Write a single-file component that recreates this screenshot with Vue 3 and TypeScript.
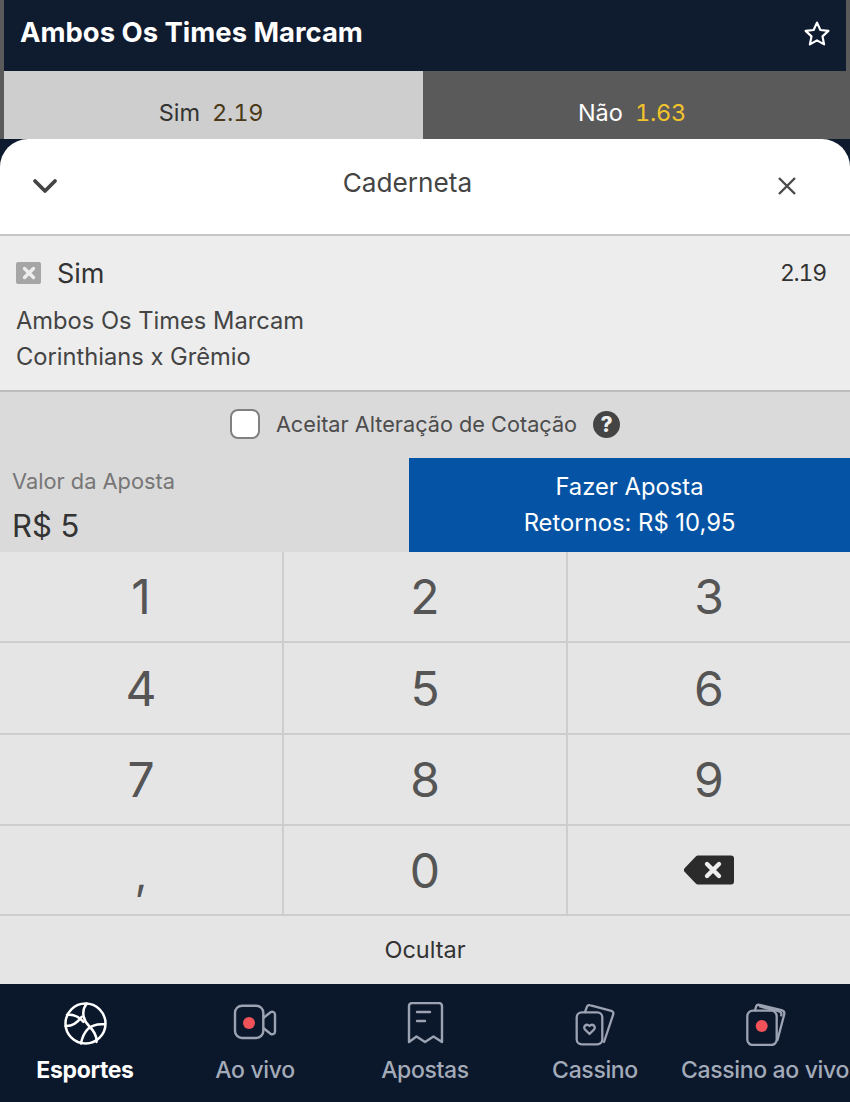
<script setup lang="ts">
const keys = ["1", "2", "3", "4", "5", "6", "7", "8", "9", ",", "0", "back"];

type NavItem = { id: string; label: string; active?: boolean };
const navItems: NavItem[] = [
  { id: "sports", label: "Esportes", active: true },
  { id: "live", label: "Ao vivo" },
  { id: "bets", label: "Apostas" },
  { id: "casino", label: "Cassino" },
  { id: "livecasino", label: "Cassino ao vivo" },
];
</script>

<template>
  <div class="page">
    <section class="market">
      <header class="market-head">
        <h1>Ambos Os Times Marcam</h1>
        <svg class="star" viewBox="0 0 28 28" width="28" height="28" fill="none" stroke="#fff" stroke-width="2.2" stroke-linejoin="round">
          <path d="M14 2.6l3.4 7.4 8 .9-5.900 5.500 1.600 8-7.100-4-7.100 4 1.600-8-5.900-5.500 8-.9z" />
        </svg>
      </header>
      <div class="odds">
        <div class="odd odd-on"><span>Sim</span><b>2.19</b></div>
        <div class="odd odd-off"><span>Não</span><b>1.63</b></div>
      </div>
    </section>

    <section class="sheet">
      <header class="sheet-head">
        <svg class="chev" viewBox="0 0 26 16" width="26" height="16" fill="none" stroke="#444" stroke-width="3.8" stroke-linecap="round" stroke-linejoin="round">
          <path d="M3 3l10 10L23 3" />
        </svg>
        <h2>Caderneta</h2>
        <svg class="close" viewBox="0 0 20 20" width="20" height="20" fill="none" stroke="#4a4a4a" stroke-width="2.4">
          <path d="M2 2l16 16M18 2L2 18" />
        </svg>
      </header>

      <div class="slip">
        <div class="slip-top">
          <span class="remove">
            <svg viewBox="0 0 14 14" width="14" height="14" fill="none" stroke="#eee" stroke-width="3.4" stroke-linecap="round">
              <path d="M2.5 2.5l9 9M11.500 2.500l-9 9" />
            </svg>
          </span>
          <span class="pick">Sim</span>
          <span class="price">2.19</span>
        </div>
        <p>Ambos Os Times Marcam</p>
        <p>Corinthians x Grêmio</p>
      </div>

      <div class="accept">
        <span class="check"></span>
        <span class="accept-text">Aceitar Alteração de Cotação</span>
        <span class="help">?</span>
      </div>

      <div class="stake">
        <div class="stake-value">
          <span class="stake-label">Valor da Aposta</span>
          <span class="stake-amount">R$ 5</span>
        </div>
        <button class="place">
          <span>Fazer Aposta</span>
          <span>Retornos: R$ 10,95</span>
        </button>
      </div>

      <div class="keypad">
        <div v-for="k in keys" :key="k" class="key">
          <svg v-if="k === 'back'" viewBox="0 0 50 30" width="50" height="30">
            <path d="M14 .5h33a3 3 0 0 1 3 3v23a3 3 0 0 1-3 3H14a3 3 0 0 1-2.200-1L.8 17a3 3 0 0 1 0-4L11.800 1.500a3 3 0 0 1 2.200-1z" fill="#2b2b2b" />
            <path d="M23 9l12 12M35 9L23 21" fill="none" stroke="#eee" stroke-width="4.400" stroke-linecap="round" />
          </svg>
          <span v-else :class="{ comma: k === ',' }">{{ k }}</span>
        </div>
      </div>

      <div class="hide">Ocultar</div>
    </section>

    <nav class="tabs">
      <div v-for="item in navItems" :key="item.id" class="tab" :class="{ active: item.active }">
        <svg v-if="item.id === 'sports'" viewBox="0 0 44 44" width="44" height="44" fill="none" stroke="#fff" stroke-width="2.500" stroke-linecap="round">
          <circle cx="22.500" cy="21.500" r="20" />
          <path d="M23.700 1.500C18 9 20 18 26 24c5 5 8 10 7.500 16" />
          <path d="M42 22.300c-6-.5-13 .4-17.500 5C21 31 19 36 18 41.500" />
          <path d="M4 13c5-1 11 1 16.500 6.800" />
          <path d="M2.500 24c4.500.2 11-2 16.200-9.300" />
        </svg>
        <svg v-else-if="item.id === 'live'" viewBox="0 0 44 44" width="44" height="44" fill="none" stroke="#9ba3b2" stroke-width="2.400" stroke-linejoin="round">
          <rect x="2" y="3.700" width="28.300" height="32.300" rx="7" />
          <path d="M30.300 16l7.200-5.700c1.800-1.300 4.500-.3 4.500 2.200v17c0 2.500-2.700 3.500-4.500 2.200L30.300 26" />
          <circle cx="16" cy="21" r="6" fill="#f0525a" stroke="none" />
        </svg>
        <svg v-else-if="item.id === 'bets'" viewBox="0 0 44 44" width="44" height="44" fill="none" stroke="#9ba3b2" stroke-width="2.400" stroke-linejoin="round" stroke-linecap="round">
          <path d="M9 1h27a3 3 0 0 1 3 3v36l-8.500-5.500L22 40l-8.500-5.500L6 40V4a3 3 0 0 1 3-3z" />
          <path d="M14 10h13M14 19h8" />
        </svg>
        <svg v-else-if="item.id === 'casino'" viewBox="0 0 44 44" width="44" height="44" fill="none" stroke="#9ba3b2" stroke-width="2.300" stroke-linejoin="round" stroke-linecap="round">
          <rect x="3.700" y="10.300" width="25.600" height="32" rx="5" />
          <path d="M12 10l2-5.300c.5-1.300 1.500-1.900 2.800-1.500l21.500 5.700c1.600.4 2.400 1.800 2 3.300L31 40" />
          <path d="M16.500 32l-4.500-4.500c-2.500-3 1.500-6.500 4.500-3.500 3-3 7 .5 4.500 3.500z" />
        </svg>
        <svg v-else viewBox="0 0 44 44" width="44" height="44" fill="none" stroke="#9ba3b2" stroke-width="2.300" stroke-linejoin="round" stroke-linecap="round">
          <rect x="4.300" y="8.700" width="29.400" height="34.300" rx="5.500" />
          <path d="M12 8.500l1-3.500c.4-1.500 1.800-2.500 3.500-2.100l22 5.300c2.200.6 3.200 2.300 2.700 4.300L34.500 38" />
          <path d="M17 4.500l18.500 4.600c2.300.6 3.300 2.300 2.700 4.300" />
          <circle cx="18.700" cy="24" r="6" fill="#f0525a" stroke="none" />
        </svg>
        <span>{{ item.label }}</span>
      </div>
    </nav>
  </div>
</template>

<style>
html,
body {
  margin: 0;
  background: #0e1a2e;
}
</style>

<style scoped>
.page {
  width: 850px;
  height: 1102px;
  display: flex;
  flex-direction: column;
  overflow: hidden;
  background: #0e1a2e;
  font-family: Inter, "Liberation Sans", sans-serif;
}
.market {
  height: 139px;
  flex: none;
  box-sizing: border-box;
  padding: 0 4px;
  background: #5a5a5a;
}
.market-head {
  height: 71px;
  box-sizing: border-box;
  padding: 0 16px;
  display: flex;
  align-items: flex-start;
  justify-content: space-between;
  background: #0f1b2f;
}
.market-head h1 {
  margin: 16px 0 0;
  font-size: 27.45px;
  line-height: 33px;
  font-weight: 700;
  color: #fff;
}
.star {
  margin: 20px -1px 0 0;
}
.odds {
  height: 68px;
  display: grid;
  grid-template-columns: 419px 1fr;
}
.odd {
  display: flex;
  align-items: center;
  justify-content: center;
  gap: 12px;
  font-size: 23.5px;
  padding: 14px 5px 0 0;
  box-sizing: border-box;
}
.odd b {
  font-weight: 400;
  font-variant-numeric: tabular-nums;
  letter-spacing: -0.2px;
}
.odd-on {
  background: #cecece;
  color: #333;
}
.odd-on b {
  color: #4a3a18;
}
.odd-off {
  background: #5a5a5a;
  color: #fff;
}
.odd-off b {
  color: #f2c42c;
}
.sheet {
  flex: 1;
  min-height: 0;
  display: flex;
  flex-direction: column;
  border-radius: 28px 28px 0 0;
  overflow: hidden;
  background: #fff;
}
.sheet-head {
  height: 95px;
  flex: none;
  box-sizing: border-box;
  padding: 0 32px;
  display: flex;
  align-items: flex-start;
  justify-content: space-between;
}
.sheet-head h2 {
  margin: 26px 20px 0 0;
  font-size: 26.200px;
  line-height: 36px;
  font-weight: 400;
  color: #444;
}
.chev {
  margin-top: 39px;
}
.close {
  margin: 37px 21px 0 0;
}
.slip {
  height: 158px;
  flex: none;
  box-sizing: border-box;
  padding: 21px 24px 0 16px;
  background: #ededed;
  border-top: 2px solid #c6c6c6;
  border-bottom: 2px solid #bdbdbd;
  color: #444;
}
.slip-top {
  display: flex;
  align-items: center;
  height: 32px;
  margin-bottom: 14px;
}
.remove {
  width: 25px;
  height: 22px;
  display: flex;
  align-items: center;
  justify-content: center;
  margin-right: 16px;
  background: #a6a6a6;
  border-radius: 2px;
}
.pick {
  font-size: 27px;
  color: #333;
}
.price {
  margin-left: auto;
  font-size: 23px;
  font-variant-numeric: tabular-nums;
  letter-spacing: -1.2px;
  color: #333;
}
.slip p {
  margin: 0;
  font-size: 23.700px;
  line-height: 36px;
}
.accept {
  height: 66px;
  flex: none;
  box-sizing: border-box;
  padding-bottom: 2px;
  display: flex;
  align-items: center;
  justify-content: center;
  background: #dadada;
  color: #4c4c4c;
  font-size: 21.700px;
}
.check {
  width: 26px;
  height: 26px;
  margin-right: 16px;
  background: #fff;
  border: 2.500px solid #808080;
  border-radius: 8px;
}
.help {
  width: 27px;
  height: 27px;
  margin-left: 16px;
  display: flex;
  align-items: center;
  justify-content: center;
  border-radius: 50%;
  background: #444;
  color: #eee;
  font-size: 21px;
  font-weight: 800;
}
.stake {
  height: 94px;
  flex: none;
  display: flex;
  background: #dadada;
}
.stake-value {
  width: 409px;
  box-sizing: border-box;
  padding: 9px 12px 0;
  display: flex;
  flex-direction: column;
}
.stake-label {
  font-size: 21.800px;
  line-height: 28px;
  color: #767676;
}
.stake-amount {
  margin-top: 13px;
  font-size: 31px;
  line-height: 36px;
  color: #333;
}
.place {
  flex: 1;
  border: 0;
  padding: 0;
  display: flex;
  flex-direction: column;
  align-items: center;
  justify-content: center;
  background: #0553a4;
  color: #fff;
  font-family: inherit;
  font-size: 23.800px;
  line-height: 36px;
}
.keypad {
  height: 364px;
  flex: none;
  display: grid;
  grid-template-columns: 284px 284px 1fr;
  grid-template-rows: 91px 92px 91px 90px;
  background: #e5e5e5;
}
.key {
  box-sizing: border-box;
  display: flex;
  align-items: center;
  justify-content: center;
  border-right: 2px solid #cdcdcd;
  border-bottom: 2px solid #cdcdcd;
  font-size: 48px;
  color: #555;
}
.key:nth-child(3n) {
  border-right: 0;
}
.comma {
  margin-top: 6px;
  font-size: 44px;
}
.hide {
  flex: 1;
  padding-top: 20px;
  box-sizing: border-box;
  text-align: center;
  font-size: 23.500px;
  line-height: 28px;
  color: #333;
  background: #e5e5e5;
}
.tabs {
  height: 118px;
  flex: none;
  display: grid;
  grid-template-columns: repeat(5, 170px);
  background: #0b172b;
}
.tab {
  display: flex;
  flex-direction: column;
  align-items: center;
  padding-top: 18px;
  color: #a3abb9;
  font-size: 23px;
  font-weight: 500;
  white-space: nowrap;
  letter-spacing: -0.35px;
}
.tab span {
  margin-top: 8px;
  line-height: 32px;
}
.tab.active {
  color: #fff;
  font-weight: 700;
}
</style>
